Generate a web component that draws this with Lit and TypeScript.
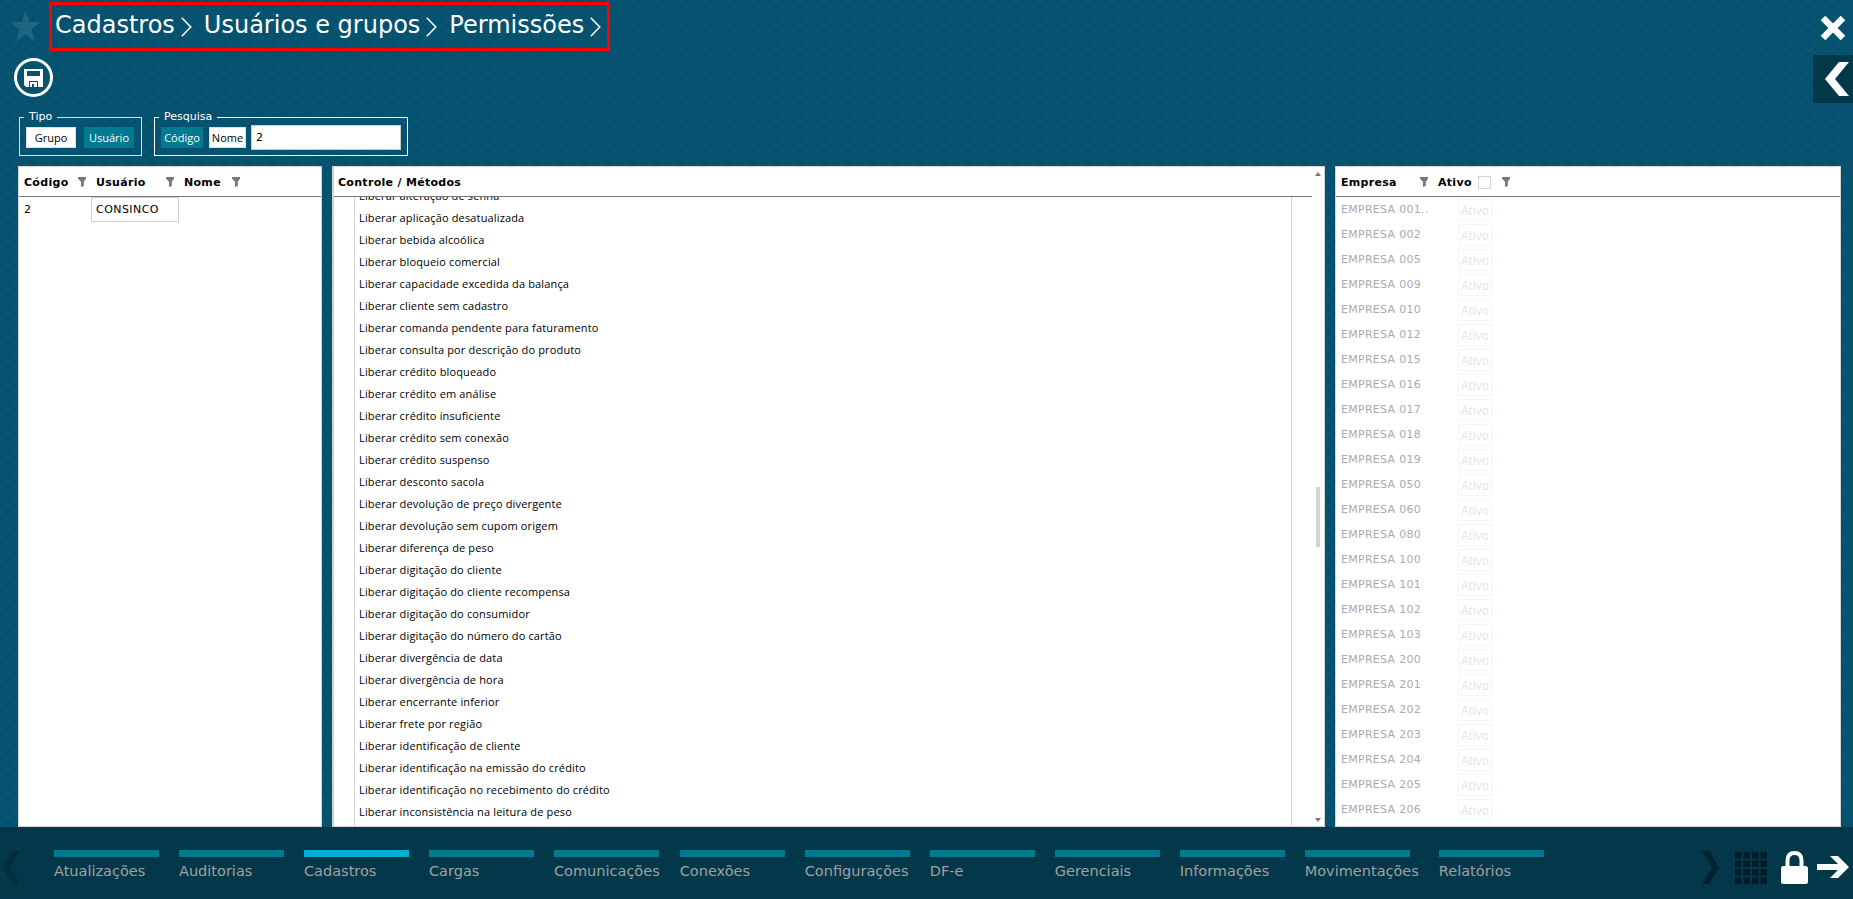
import { LitElement, html, css, svg } from 'lit';
import { customElement, state } from 'lit/decorators.js';
import { classMap } from 'lit/directives/class-map.js';

const MENU = [
  'Atualizações', 'Auditorias', 'Cadastros', 'Cargas', 'Comunicações', 'Conexões',
  'Configurações', 'DF-e', 'Gerenciais', 'Informações', 'Movimentações', 'Relatórios',
];

const METODOS = [
  'Liberar alteração de senha',
  'Liberar aplicação desatualizada',
  'Liberar bebida alcoólica',
  'Liberar bloqueio comercial',
  'Liberar capacidade excedida da balança',
  'Liberar cliente sem cadastro',
  'Liberar comanda pendente para faturamento',
  'Liberar consulta por descrição do produto',
  'Liberar crédito bloqueado',
  'Liberar crédito em análise',
  'Liberar crédito insuficiente',
  'Liberar crédito sem conexão',
  'Liberar crédito suspenso',
  'Liberar desconto sacola',
  'Liberar devolução de preço divergente',
  'Liberar devolução sem cupom origem',
  'Liberar diferença de peso',
  'Liberar digitação do cliente',
  'Liberar digitação do cliente recompensa',
  'Liberar digitação do consumidor',
  'Liberar digitação do número do cartão',
  'Liberar divergência de data',
  'Liberar divergência de hora',
  'Liberar encerrante inferior',
  'Liberar frete por região',
  'Liberar identificação de cliente',
  'Liberar identificação na emissão do crédito',
  'Liberar identificação no recebimento do crédito',
  'Liberar inconsistência na leitura de peso',
];

const EMPRESAS = [
  '001..', '002', '005', '009', '010', '012', '015', '016', '017', '018', '019', '050', '060',
  '080', '100', '101', '102', '103', '200', '201', '202', '203', '204', '205', '206',
];

const funil = html`<svg class="funil" viewBox="0 0 8 10" width="8" height="10">
  <path d="M0 0h8v1.800L5.800 4.800V9L3 10V4.800L0 1.800z" fill="#777" />
</svg>`;

const seta = html`<svg class="seta" viewBox="0 0 11 20" width="11" height="20">
  <path d="M.8.8 9.8 10 .8 19.2" fill="none" stroke="#fff" stroke-width="1.5" />
</svg>`;

@customElement('app-root')
export class AppRoot extends LitElement {
  @state() ativo = 'Cadastros';
  @state() tipo = 'Usuário';
  @state() pesquisa = 'Código';

  static styles = css`
    :host {
      display: flex;
      flex-direction: column;
      width: 1853px;
      height: 899px;
      overflow: hidden;
      font-family: 'DejaVu Sans', sans-serif;
      font-size: 11px;
      color: #000;
      background-color: #065471;
      background-image:
        repeating-linear-gradient(45deg, rgba(0, 50, 70, 0.12) 0 1px, transparent 1px 8.485px),
        repeating-linear-gradient(-45deg, rgba(0, 50, 70, 0.12) 0 1px, transparent 1px 8.485px);
    }

    * {
      box-sizing: border-box;
    }

    svg {
      display: block;
      flex: none;
    }

    header {
      display: flex;
      justify-content: space-between;
      height: 111px;
    }

    .topo {
      display: flex;
      padding: 2px 0 0 8px;
    }

    .estrela {
      margin: 8px 8px 0 2px;
    }

    .trilha {
      display: flex;
      align-items: flex-start;
      width: 561px;
      height: 49px;
      padding-left: 3px;
      border: 3px solid #f00;
      color: #fff;
      font-size: 24px;
      line-height: 40px;
      white-space: nowrap;
    }

    .trilha .seta {
      margin: 12px 12px 0 6px;
    }

    .salvar {
      margin: 6px 0 0 14px;
    }

    .lado {
      display: flex;
      flex-direction: column;
      align-items: flex-end;
    }

    .fechar {
      margin: 15px 7px 14px 0;
    }

    .abrir {
      display: flex;
      width: 40px;
      height: 48px;
      padding: 7px 4px 0 12px;
      background: #03384b;
    }

    .filtros {
      display: flex;
      gap: 12px;
      height: 55px;
      padding-left: 19px;
      font-family: 'Open Sans', 'Noto Sans', sans-serif;
    }

    fieldset {
      display: flex;
      align-items: center;
      height: 45px;
      margin: 0;
      padding: 0 6px 3px;
      border: 1px solid #d3dde1;
    }

    fieldset.busca {
      width: 254px;
      padding: 0 5px 3px 6px;
      border-color: #fff;
    }

    fieldset.tipo {
      width: 123px;
    }

    legend {
      height: 12px;
      margin-left: -2px;
      padding: 0 5px;
      color: #fff;
      font-family: 'DejaVu Sans', sans-serif;
      font-size: 11px;
      line-height: 12px;
    }

    .linha {
      display: flex;
      align-items: center;
      height: 25px;
    }

    .opcao {
      height: 21px;
      padding: 0;
      border: 1px solid #ddd;
      background: #fff;
      color: #000;
      font: inherit;
      line-height: 19px;
    }

    .opcao.marcada {
      border-color: #007a91;
      background: #007a91;
      color: #fff;
    }

    .tipo .linha {
      gap: 8px;
    }

    .tipo .opcao {
      width: 50px;
    }

    .busca .linha {
      gap: 6px;
    }

    .busca .opcao {
      width: 42px;
    }

    .busca .opcao:nth-child(2) {
      width: 37px;
    }

    .busca input {
      width: 150px;
      height: 25px;
      margin-left: -1px;
      padding: 0 4px 1px;
      border: 1px solid #ccc;
      background: #fff;
      font: 11px 'DejaVu Sans', sans-serif;
    }

    main {
      display: flex;
      gap: 10px;
      height: 661px;
      padding-left: 18px;
    }

    .painel {
      display: flex;
      flex-direction: column;
      height: 661px;
      overflow: hidden;
      border: 1px solid #d3d3d3;
      background: #fff;
    }

    .usuarios {
      width: 304px;
    }

    .metodos {
      flex-direction: row;
      width: 993px;
      border-left-width: 2px;
    }

    .empresas {
      width: 506px;
    }

    .cabecalho {
      display: flex;
      flex: none;
      align-items: center;
      height: 30px;
      padding: 2px 0 0 5px;
      border-bottom: 1px solid #777;
      font-weight: bold;
      letter-spacing: 0.3px;
    }

    .cabecalho .col {
      display: flex;
      align-items: center;
      justify-content: space-between;
      margin-right: 10px;
    }

    .funil {
      margin-top: -1px;
    }

    .col.codigo {
      width: 62px;
    }

    .col.usuario {
      width: 78px;
    }

    .col.nome {
      width: 56px;
    }

    .col.empresa {
      width: 87px;
    }

    .col.situacao {
      width: 72px;
    }

    .caixa {
      width: 13px;
      height: 13px;
      margin: -1px 5px 0 0;
      border: 1px solid #d3d3d3;
    }

    .registro {
      display: flex;
      line-height: 26px;
    }

    .registro .chave {
      width: 72px;
      padding-left: 5px;
    }

    .registro .nome {
      width: 88px;
      height: 25px;
      padding-left: 4px;
      border: 1px solid #ccc;
      letter-spacing: 0.45px;
      line-height: 24px;
    }

    .grade {
      flex: 1;
      display: flex;
      flex-direction: column;
      min-width: 0;
    }

    .grade .cabecalho {
      padding-left: 4px;
    }

    .lista {
      flex: 1;
      min-height: 0;
      margin: 0 20px 0 20px;
      padding: 0;
      border: solid #d3d3d3;
      border-width: 0 1px;
      overflow: hidden;
      font-family: 'Open Sans', 'Noto Sans', sans-serif;
      letter-spacing: 0.15px;
      list-style: none;
    }

    .lista li {
      height: 22px;
      padding-left: 4px;
      line-height: 22px;
      white-space: nowrap;
    }

    .lista li:first-child {
      margin-top: -12px;
    }

    .rolagem {
      display: flex;
      flex-direction: column;
      align-items: center;
      width: 12px;
      padding: 5px 0 4px;
    }

    .trilho {
      flex: 1;
      padding-top: 311px;
    }

    .polegar {
      width: 4px;
      height: 60px;
      background: #d3d3d3;
    }

    .empresa-linha {
      display: flex;
      height: 25px;
      padding-left: 5px;
      color: #aaa;
      letter-spacing: 0.28px;
      line-height: 25px;
    }

    .empresa-linha .rotulo {
      width: 117px;
    }

    .empresa-linha .marca {
      width: 34px;
      height: 22px;
      margin-top: 2px;
      border: 1px solid #f5f5f5;
      color: #e5e5e5;
      font-family: 'Open Sans', 'Noto Sans', sans-serif;
      font-size: 12px;
      letter-spacing: 0;
      line-height: 22px;
      text-align: center;
    }

    footer {
      display: flex;
      justify-content: space-between;
      height: 72px;
      padding: 0 4px 0 3px;
      background: #03384b;
    }

    .menu {
      display: flex;
      gap: 20px;
    }

    .anterior {
      margin: 24px 14px 0 0;
    }

    .item {
      min-width: 105px;
      padding-top: 23px;
      color: #a0a0a0;
      font-size: 14.5px;
      line-height: 17px;
      white-space: nowrap;
    }

    .item::before {
      content: '';
      display: block;
      width: 105px;
      height: 7px;
      margin-bottom: 6px;
      background: #007a91;
    }

    .item.atual::before {
      background: #00afd1;
    }

    .acoes {
      display: flex;
      padding-top: 24px;
    }

    .grelha {
      margin: 1px 14px 0 16px;
    }

    .sair {
      margin: 5px 0 0 9px;
    }
  `;

  private opcao(nome: string, atual: string) {
    return html`<button class=${classMap({ opcao: true, marcada: nome === atual })}>${nome}</button>`;
  }

  private topo() {
    return html`
      <header>
        <div>
          <div class="topo">
            <svg class="estrela" viewBox="0 0 31 32" width="31" height="32">
              <path d="M15.5 0 19.3 12H31L21.500 19.500 25.300 32 15.500 24.300 5.700 32 9.500 19.500 0 12H11.700z" fill="#1d6580" />
            </svg>
            <nav class="trilha">
              <span>Cadastros</span>${seta}<span>Usuários e grupos</span>${seta}<span>Permissões</span>${seta}
            </nav>
          </div>
          <svg class="salvar" viewBox="0 0 40 40" width="40" height="40">
            <circle cx="19.500" cy="20.500" r="18" fill="none" stroke="#fff" stroke-width="3" />
            <path d="M10 12h19v18h-5v-6h-9v6h-3l-2-2zM13 14v5h13v-5z" fill="#fff" fill-rule="evenodd" />
            <path d="M16 25h7v5h-3v-3h-2v3h-2z" fill="#fff" />
          </svg>
        </div>
        <div class="lado">
          <svg class="fechar" viewBox="0 0 26 26" width="26" height="26">
            <path d="M3 3 23 23M23 3 3 23" stroke="#fff" stroke-width="6.500" />
          </svg>
          <div class="abrir">
            <svg viewBox="0 0 24 34" width="24" height="34">
              <path d="M14 0h10L10 17l14 17H14L0 17z" fill="#fff" />
            </svg>
          </div>
        </div>
      </header>
    `;
  }

  private filtros() {
    return html`
      <div class="filtros">
        <fieldset class="tipo">
          <legend>Tipo</legend>
          <div class="linha">${this.opcao('Grupo', this.tipo)}${this.opcao('Usuário', this.tipo)}</div>
        </fieldset>
        <fieldset class="busca">
          <legend>Pesquisa</legend>
          <div class="linha">
            ${this.opcao('Código', this.pesquisa)}${this.opcao('Nome', this.pesquisa)}
            <input type="text" .value=${'2'} />
          </div>
        </fieldset>
      </div>
    `;
  }

  private paineis() {
    return html`
      <main>
        <section class="painel usuarios">
          <div class="cabecalho">
            <div class="col codigo">Código ${funil}</div>
            <div class="col usuario">Usuário ${funil}</div>
            <div class="col nome">Nome ${funil}</div>
          </div>
          <div class="registro">
            <div class="chave">2</div>
            <div class="nome">CONSINCO</div>
          </div>
        </section>
        <section class="painel metodos">
          <div class="grade">
            <div class="cabecalho">Controle / Métodos</div>
            <ul class="lista">
              ${METODOS.map((m) => html`<li>${m}</li>`)}
            </ul>
          </div>
          <div class="rolagem">
            <svg viewBox="0 0 6 4" width="6" height="4"><path d="M0 4 3 0 6 4z" fill="#777" /></svg>
            <div class="trilho"><div class="polegar"></div></div>
            <svg viewBox="0 0 6 4" width="6" height="4"><path d="M0 0h6L3 4z" fill="#777" /></svg>
          </div>
        </section>
        <section class="painel empresas">
          <div class="cabecalho">
            <div class="col empresa">Empresa ${funil}</div>
            <div class="col situacao">Ativo <span class="caixa"></span>${funil}</div>
          </div>
          ${EMPRESAS.map(
            (e) => html`<div class="empresa-linha">
              <span class="rotulo">EMPRESA ${e}</span><span class="marca">Ativo</span>
            </div>`
          )}
        </section>
      </main>
    `;
  }

  private rodape() {
    const pontos = [0, 1, 2, 3].flatMap((l) => [0, 1, 2, 3].map((c) => [c * 8.5, l * 8.5]));
    return html`
      <footer>
        <div class="menu">
          <svg class="anterior" viewBox="0 0 17 33" width="17" height="33">
            <path d="M10 0h7L7 16.500 17 33h-7L0 16.500z" fill="#022b3b" />
          </svg>
          ${MENU.map((m) => html`<div class=${classMap({ item: true, atual: m === this.ativo })}>${m}</div>`)}
        </div>
        <div class="acoes">
          <svg viewBox="0 0 17 33" width="17" height="33">
            <path d="M0 0h7l10 16.500L7 33H0l10-16.500z" fill="#02222f" />
          </svg>
          <svg class="grelha" viewBox="0 0 32 32" width="32" height="32">
            ${pontos.map(([x, y]) => svg`<rect x=${x} y=${y} width="6.5" height="6.5" fill="#011c26" />`)}
          </svg>
          <svg viewBox="0 0 27 33" width="27" height="33">
            <path d="M6.500 17V9.500C6.500 4.500 9 2 13.500 2s7 2.500 7 7.500V17" fill="none" stroke="#fff" stroke-width="4" />
            <rect y="15" width="27" height="18" rx="2.500" fill="#fff" />
          </svg>
          <svg class="sair" viewBox="0 0 32 22" width="32" height="22">
            <path d="M0 8h21L13 0h8l11 11-11 11h-8l8-8H0z" fill="#fff" />
          </svg>
        </div>
      </footer>
    `;
  }

  render() {
    return html`${this.topo()}${this.filtros()}${this.paineis()}${this.rodape()}`;
  }
}
